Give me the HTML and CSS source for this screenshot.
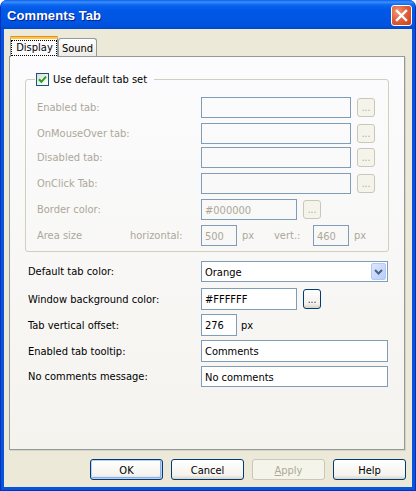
FILE: index.html
```html
<!DOCTYPE html>
<html>
<head>
<meta charset="utf-8">
<link rel="stylesheet" href="styles.css">
</head>
<body>
<div class="window">
  <div class="titlebar">
    <span class="title">Comments Tab</span>
    <span class="close"><svg width="19" height="19" viewBox="0 0 19 19"><path d="M5 5 L14 14 M14 5 L5 14" stroke="#fff" stroke-width="2.4" stroke-linecap="square"/></svg></span>
  </div>
  <div class="client">
    <div class="tabs">
      <div class="tab active"><span class="focus">Display</span></div>
      <div class="tab">Sound</div>
    </div>
    <div class="panel">
      <fieldset class="group">
        <legend class="legend"><span class="check"><svg width="11" height="11" viewBox="0 0 11 11"><path d="M2 5.2 L4.4 7.8 L9 2.6" fill="none" stroke="#21A121" stroke-width="2"/></svg></span>Use default tab set</legend>
        <div class="row"><span class="lbl dis">Enabled tab:</span><span class="field dis w150"></span><span class="dots dis">...</span></div>
        <div class="row"><span class="lbl dis">OnMouseOver tab:</span><span class="field dis w150"></span><span class="dots dis">...</span></div>
        <div class="row tight"><span class="lbl dis">Disabled tab:</span><span class="field dis w150"></span><span class="dots dis">...</span></div>
        <div class="row"><span class="lbl dis">OnClick Tab:</span><span class="field dis w150"></span><span class="dots dis">...</span></div>
        <div class="row"><span class="lbl dis">Border color:</span><span class="field dis w96">#000000</span><span class="dots dis">...</span></div>
        <div class="row"><span class="lbl dis area">Area size</span><span class="dis horiz">horizontal:</span><span class="field dis w36">500</span><span class="dis px">px</span><span class="dis vert">vert.:</span><span class="field dis w36">460</span><span class="dis px">px</span></div>
      </fieldset>
      <div class="form">
        <div class="frow"><span class="flbl">Default tab color:</span><span class="select"><span class="seltext">Orange</span><span class="arrow"><svg width="9" height="6" viewBox="0 0 9 6"><path d="M1 1 L4.5 4.5 L8 1" fill="none" stroke="#4D6185" stroke-width="2"/></svg></span></span></div>
        <div class="frow first"><span class="flbl">Window background color:</span><span class="field w96 tall">#FFFFFF</span><span class="dots on">...</span></div>
        <div class="frow"><span class="flbl">Tab vertical offset:</span><span class="field w36 tall">276</span><span class="px2">px</span></div>
        <div class="frow"><span class="flbl">Enabled tab tooltip:</span><span class="field w187 tall">Comments</span></div>
        <div class="frow"><span class="flbl">No comments message:</span><span class="field w187">No comments</span></div>
      </div>
    </div>
    <div class="buttons">
      <span class="btn default">OK</span>
      <span class="btn">Cancel</span>
      <span class="btn disabled"><u>A</u>pply</span>
      <span class="btn">Help</span>
    </div>
  </div>
</div>
</body>
</html>
```
FILE: styles.css
```css
* { box-sizing: border-box; }
html, body { margin: 0; padding: 0; }
body {
  width: 416px; height: 491px; overflow: hidden; background: #fff;
  font-family: "DejaVu Sans Condensed", "DejaVu Sans", sans-serif; font-size: 11px; color: #000;
}
.window {
  width: 416px; height: 491px; display: flex; flex-direction: column;
  background: #0855DD; border-radius: 7px 7px 0 0; overflow: hidden;
  border: 1px solid #0831B8; border-top: none;
}
.titlebar {
  height: 29px; flex: none; display: flex; align-items: center; justify-content: space-between;
  padding: 0 3px 0 6px;
  background: linear-gradient(#0A5FEF 0, #3D8FF8 2px, #0A66F0 5px, #0058E8 10px, #0055E3 20px, #0052DD 26px, #0048CC 29px);
}
.title {
  color: #fff; font-weight: bold; font-size: 13px; letter-spacing: 0.1px;
  font-family: "Liberation Sans", Arial, sans-serif;
  text-shadow: 1px 1px 0 #0A1E8C; padding-top: 1px;
}
.close {
  width: 21px; height: 21px; margin-top: 1px; border: 1px solid #fff; border-radius: 3px;
  display: flex; align-items: center; justify-content: center;
  background: radial-gradient(circle at 30% 30%, #F19676 0, #E0603D 45%, #C93F1C 100%);
}
.client {
  flex: 1; margin: 0 3px 3px 3px; background: #ECE9D8;
  padding: 7px 6px 0 5px; display: flex; flex-direction: column;
}
.tabs {
  height: 21px; margin-bottom: -1px; display: flex; align-items: flex-end;
  padding-left: 1px; position: relative; z-index: 1;
}
.tab {
  height: 18px; margin-bottom: 1px; width: 39px; border: 1px solid #919B9C; border-bottom: none;
  border-radius: 3px 3px 0 0; background: linear-gradient(#FFFFFF, #F3F2EE 60%, #ECEBE6);
  display: flex; align-items: center; justify-content: center; padding-top: 1px;
}
.tab.active {
  height: 21px; margin-bottom: 0; width: 48px; background: #FCFCFE;
  border-top: 3px solid #FFC83C;
  position: relative; padding-top: 0;
}
.tab.active::before {
  content: ""; position: absolute; left: -1px; right: -1px; top: -3px; height: 1px;
  background: #E68B2C; border-radius: 3px 3px 0 0;
}
.focus { outline: 1px dotted #000; padding: 1px 3px 1px 4px; line-height: 12px; }
.panel {
  flex: none; height: 394px; width: 396px; border: 1px solid #919B9C;
  background: linear-gradient(#FCFCFE, #F4F3EE);
  box-shadow: 1px 1px 0 #D6D3C4;
  padding: 16px 0 0 15px;
}
.group {
  margin: 0; width: 364px; min-width: 0; border: 1px solid #D0D0BF; border-radius: 3px;
  padding: 11px 13px 5px 11px;
}
.legend {
  padding: 0 7px 0 1px; margin-left: -2px; height: 13px; display: flex; align-items: center;
  line-height: 13px;
}
.check {
  width: 13px; height: 13px; border: 1px solid #1C5180; margin-right: 4px;
  background: linear-gradient(135deg, #DCDCD7, #FFFFFF);
  display: flex; align-items: center; justify-content: center;
}
.row { display: flex; align-items: center; height: 21px; margin-top: 5px; }
.row:first-of-type { margin-top: 0; }
.row.tight { margin-top: 3px; }
.lbl { width: 164px; flex: none; }
.dis { color: #ACA899; }
.field {
  height: 21px; border: 1px solid #7F9DB9; background: #fff; flex: none;
  display: flex; align-items: center; padding-left: 3px; padding-top: 1px;
}
.field.dis { background: transparent; }
.field.tall { height: 22px; }
.w150 { width: 150px; }
.w96 { width: 96px; }
.w36 { width: 36px; }
.w187 { width: 187px; }
.dots {
  width: 18px; height: 19px; margin-left: 6px; border-radius: 3px; flex: none;
  display: flex; align-items: flex-end; justify-content: center; padding-bottom: 3px;
  line-height: 10px; font-size: 10px;
}
.dots.dis { border: 1px solid #C9C7BA; background: #F5F4EA; }
.dots.on {
  height: 20px; border: 1px solid #003C74; color: #3B1A6B;
  background: linear-gradient(#FFFFFF, #F2F1EB 75%, #D8D3C8);
}
.area { width: 93px; }
.horiz { width: 71px; flex: none; }
.px { width: 32px; margin-left: 5px; flex: none; }
.vert { width: 39px; flex: none; }
.row .px:last-child { width: auto; }
.form { padding-left: 3px; margin-top: 9px; }
.frow { display: flex; align-items: center; margin-top: 4px; }
.frow:first-child { margin-top: 0; }
.frow.first { margin-top: 6px; }
.flbl { width: 173px; flex: none; }
.px2 { margin-left: 4px; }
.select {
  width: 187px; height: 21px; border: 1px solid #7F9DB9; background: #fff;
  display: flex; align-items: center; justify-content: space-between; padding: 1px 1px 1px 3px;
}
.seltext { padding-top: 1px; }
.arrow {
  width: 15px; height: 17px; border: 1px solid #B4C8F4; border-radius: 2px;
  background: linear-gradient(135deg, #DCE7FE, #B8CDF9);
  display: flex; align-items: center; justify-content: center;
}
.buttons {
  display: flex; justify-content: flex-end; gap: 8px; margin-top: 9px; margin-right: 0;
}
.btn {
  width: 73px; height: 21px; border: 1px solid #003C74; border-radius: 3px;
  background: linear-gradient(#FFFFFF, #F4F3EE 80%, #D9D3C7);
  display: flex; align-items: center; justify-content: center; padding-top: 1px;
}
.btn.default { box-shadow: inset 0 0 0 1px #B9D1F6, inset -1px -1px 0 1px #8DAEEA; }
.btn.disabled { border-color: #C9C7BA; background: #F5F4EA; color: #ACA899; }
```
